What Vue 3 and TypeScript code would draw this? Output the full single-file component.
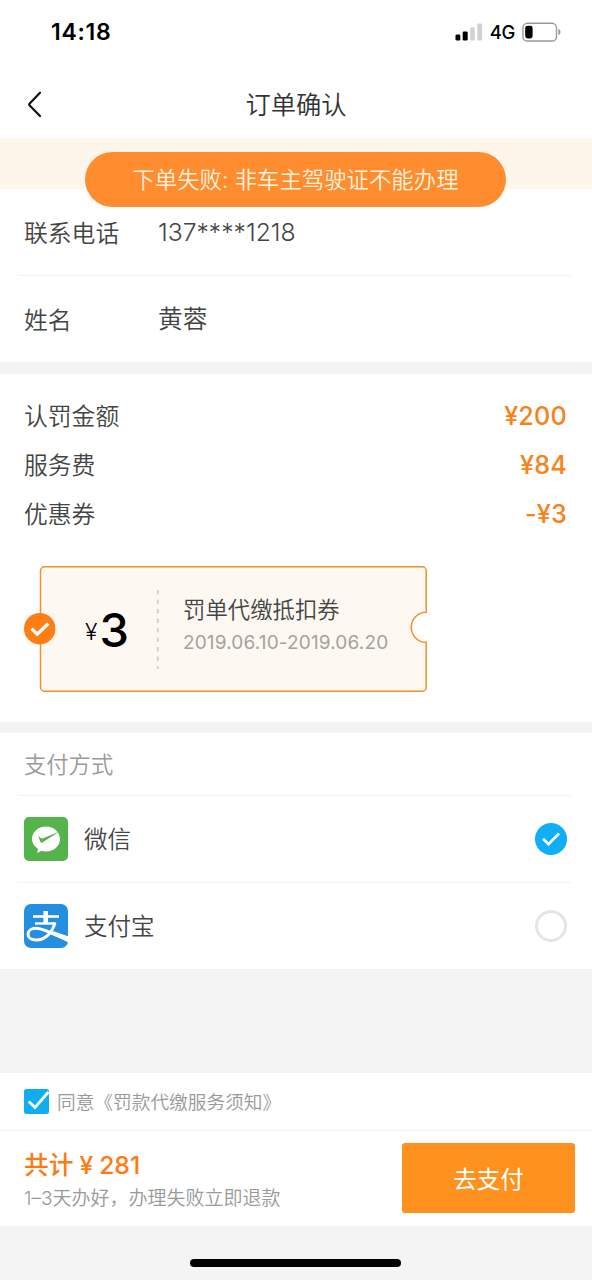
<script setup lang="ts">
import { ref } from 'vue'

interface Fee { label: string; amount: string }

const fees: Fee[] = [
  { label: '认罚金额', amount: '¥200' },
  { label: '服务费', amount: '¥84' },
  { label: '优惠券', amount: '-¥3' },
]
const contacts = [
  { label: '联系电话', value: '137****1218' },
  { label: '姓名', value: '黄蓉' },
]
const method = ref<'wechat' | 'alipay'>('wechat')
</script>

<template>
  <div class="page">
    <header class="status">
      <span class="time">14:18</span>
      <div class="indicators">
        <svg class="signal" width="28" height="18" viewBox="0 0 28 18">
          <rect x="0.5" y="11.5" width="4.8" height="6" rx="1.3" />
          <rect x="7.7" y="8.5" width="5" height="9" rx="1.3" />
          <rect x="15.2" y="4.5" width="4.6" height="13" rx="1" fill="#d2d2d2" />
          <rect x="22.3" y="0.5" width="4.8" height="17" rx="1" fill="#d2d2d2" />
        </svg>
        <span class="network">4G</span>
        <svg class="battery" width="40" height="20" viewBox="0 0 40 20">
          <rect x="0.9" y="1.3" width="33.6" height="17.7" rx="4.6" fill="none" stroke="#999" stroke-width="1.4" />
          <rect x="3.2" y="3.7" width="7.4" height="12.7" rx="2.4" />
          <path d="M36.4 6.8q2.2 1 2.2 3.2t-2.2 3.2z" fill="#999" />
        </svg>
      </div>
    </header>

    <nav class="nav">
      <svg class="back" width="16" height="28" viewBox="0 0 16 28">
        <path d="M13 2.7 2.7 13.5q-1 1 0 2L13 26" fill="none" stroke="#111" stroke-width="2.2" stroke-linecap="round" />
      </svg>
      <h1>订单确认</h1>
    </nav>

    <div class="notice">
      <div class="toast">下单失败: 非车主驾驶证不能办理</div>
    </div>

    <section class="contacts">
      <div v-for="c in contacts" :key="c.label" class="contact">
        <span class="label">{{ c.label }}</span>
        <span class="value">{{ c.value }}</span>
      </div>
    </section>

    <section class="fees">
      <div v-for="f in fees" :key="f.label" class="fee">
        <span class="label">{{ f.label }}</span>
        <span class="amount">{{ f.amount }}</span>
      </div>
      <div class="coupon">
        <svg class="outline" width="404" height="126" viewBox="0 0 404 126">
          <path
            d="M20.5 0.8H398.2a4 4 0 0 1 4 4V46.3A15 15 0 0 0 402.2 76.3V121.2a4 4 0 0 1-4 4H20.5a4 4 0 0 1-4-4V4.8a4 4 0 0 1 4-4z"
            fill="#fdf8f1" stroke="#f0902f" stroke-width="1.5" />
          <path d="M133.8 24V103" stroke="#d2cfcb" stroke-width="1.8" stroke-dasharray="4.6 4.9" />
          <circle cx="15.7" cy="62.7" r="15.7" fill="#fd7e14" />
          <path d="m7.5 62.7 5.7 5.5L24.3 57.5" fill="none" stroke="#fff" stroke-width="3.2" />
        </svg>
        <div class="worth"><span class="yen">¥</span><b>3</b></div>
        <div class="info">
          <div class="name">罚单代缴抵扣券</div>
          <div class="dates">2019.06.10-2019.06.20</div>
        </div>
      </div>
    </section>

    <section class="payment">
      <div class="heading">支付方式</div>
      <div class="method" @click="method = 'wechat'">
        <svg class="logo" width="44" height="44" viewBox="0 0 44 44">
          <rect width="44" height="44" rx="5" fill="#55b34b" />
          <path d="M22 9.5c7.8 0 14 5.500 14 12.500s-6.200 12.500-14 12.500q-2.300 0-4.500-.7L13.300 36l.6-4.300C10.300 29.500 8 26 8 22 8 15 14.200 9.500 22 9.500z" fill="#fff" />
          <path d="M14.300 18.800q2.500 3 4.300 2.600L35.500 14.600 18.300 25.500q-1.400.8-2-.8z" fill="#55b34b" />
        </svg>
        <span>微信</span>
        <i class="radio" :class="{ on: method === 'wechat' }">
          <svg v-if="method === 'wechat'" width="32" height="32" viewBox="0 0 32 32">
            <path d="m8 15.7 5.5 5.5L24 10.5" fill="none" stroke="#fff" stroke-width="2.7" />
          </svg>
        </i>
      </div>
      <div class="method" @click="method = 'alipay'">
        <svg class="logo" width="44" height="44" viewBox="0 0 44 44">
          <rect width="44" height="44" rx="7" fill="#248fe0" />
          <g fill="none" stroke="#fff">
            <path d="M9 12.500H35" stroke-width="2.6" />
            <path d="M21.700 7V19" stroke-width="4.6" />
            <path d="M11 19.500H31.500" stroke-width="2.4" />
            <path d="M31 18.600C28.500 28 21.500 36 12.500 36 7 36 4 33.500 4 30.200 4 26.500 7.500 24.300 12 24.300 20 24.300 27 30 44 35.500" stroke-width="3" />
          </g>
          <path d="M29.500 27.300 44 32.200V38.200L26.500 29.800z" fill="#fff" />
        </svg>
        <span>支付宝</span>
        <i class="radio" :class="{ on: method === 'alipay' }">
          <svg v-if="method === 'alipay'" width="32" height="32" viewBox="0 0 32 32">
            <path d="m8 15.7 5.5 5.5L24 10.5" fill="none" stroke="#fff" stroke-width="2.7" />
          </svg>
        </i>
      </div>
    </section>

    <section class="agree">
      <svg width="25" height="25" viewBox="0 0 25 25">
        <rect width="25" height="25" rx="2.5" fill="#10aef0" />
        <path d="m4.8 12.5 6.2 6L24.5 3" fill="none" stroke="#fff" stroke-width="2.8" />
      </svg>
      <span>同意《罚款代缴服务须知》</span>
    </section>

    <footer class="footer">
      <div>
        <div class="total"><span>共计</span><span>¥</span><span>281</span></div>
        <div class="tip">1–3天办好，办理失败立即退款</div>
      </div>
      <button>去支付</button>
    </footer>
    <div class="home"></div>
  </div>
</template>

<style>
body { margin: 0; background: #f4f4f4; }
</style>

<style scoped>
* { box-sizing: border-box; }
.page {
  width: 592px; height: 1280px; display: flex; flex-direction: column; overflow: hidden;
  background: #f4f4f4; color: #444; font-family: Inter, "Noto Sans CJK SC", sans-serif; font-weight: 350;
  white-space: nowrap;
}
.status { height: 64px; flex: none; background: #fff; display: flex; justify-content: space-between; padding: 0 30px 0 51px; align-items: center; color: #000; }
.time { font-size: 23px; font-weight: 600; letter-spacing: 0.7px; margin-top: -1px; }
.indicators { display: flex; align-items: center; }
.network { font-size: 18.5px; font-weight: 500; margin: 0 7px; letter-spacing: -0.3px; }
.nav { height: 74px; flex: none; background: #fff; display: flex; align-items: center; justify-content: center; }
.back { margin: 6px -43px 0 27px; }
h1 { flex: 1; margin: 8px 0 0; text-align: center; font-size: 25.3px; font-weight: 350; color: #333; line-height: 36px; }
.notice { height: 51px; flex: none; background: #fef6eb; position: relative; }
.toast { position: absolute; left: 85px; top: 14px; width: 421px; height: 55px; border-radius: 28px; background: #ff8c2e; color: #fff3dc; font-size: 22.4px; text-align: center; line-height: 55px; }
.contacts { flex: none; height: 173px; background: #fff; }
.contact { height: 87px; margin: 0 21px 0 18px; padding-left: 6px; border-bottom: 1px solid #f3f3f3; display: flex; align-items: center; }
.contact .label { width: 134px; margin-top: 3px; }
.label { font-size: 23.8px; line-height: 34px; }
.value { font-size: 24.7px; line-height: 34px; }
.contact .value { margin-top: -1px; }
.fees { flex: none; margin-top: 12px; height: 348px; background: #fff; padding: 18px 25px 0 24px; }
.fee { height: 49px; display: flex; align-items: center; justify-content: space-between; }
.amount { color: #f98218; font-size: 25.2px; font-weight: 500; margin-top: -2px; letter-spacing: 0.2px; }
.coupon { position: relative; width: 404px; height: 126px; margin-top: 27px; display: flex; }
.outline { position: absolute; left: 0; top: 0; }
.worth { position: relative; width: 159px; padding-left: 61px; color: #000; display: flex; align-items: center; gap: 2px; }
.yen { font-size: 23px; font-weight: 350; padding-top: 5px; }
.worth b { font-size: 47px; font-weight: 500; }
.info { position: relative; padding-top: 27px; }
.name { font-size: 22.4px; line-height: 34px; }
.dates { font-size: 19px; line-height: 31px; color: #a6a29d; font-weight: 400; letter-spacing: 0.15px; }
.payment { flex: none; margin-top: 11px; height: 236px; background: #fff; padding: 0 21px 0 18px; }
.heading { height: 63px; padding: 0 0 3px 6px; display: flex; align-items: center; color: #999; font-size: 22.3px; border-bottom: 1px solid #f3f3f3; }
.method { height: 86px; display: flex; align-items: center; padding: 0 4px 0 6px; font-size: 23.5px; }
.method + .method { height: 87px; border-top: 1px solid #f3f3f3; }
.method span { margin: -2px 0 0 16px; }
.radio { margin-left: auto; width: 32px; height: 32px; border-radius: 50%; border: 3px solid #e5e5e5; }
.radio.on { border: 0; background: #10aef5; }
.radio svg { display: block; }
.agree { flex: none; margin-top: 104px; height: 57px; background: #fff; display: flex; align-items: center; padding-left: 24px; font-size: 18.7px; color: #999; gap: 8px; }
.agree span { margin-top: -2px; }
.footer { flex: none; height: 96px; border-top: 1px solid #f3f3f3; background: #fff; display: flex; justify-content: space-between; padding: 12px 17px 0 24px; }
.total { display: flex; gap: 6px; font-size: 24.7px; line-height: 44px; font-weight: 500; color: #ff7a12; }
.tip { font-size: 19px; line-height: 24px; color: #999; }
button { width: 173px; height: 70px; padding: 0; border: 0; border-radius: 3px; background: #ff921e; color: #fff; font: inherit; font-size: 23.5px; font-weight: 400; }
.home { flex: none; width: 211px; height: 8px; border-radius: 4px; background: #000; margin: 33px 0 0 190px; }
</style>
